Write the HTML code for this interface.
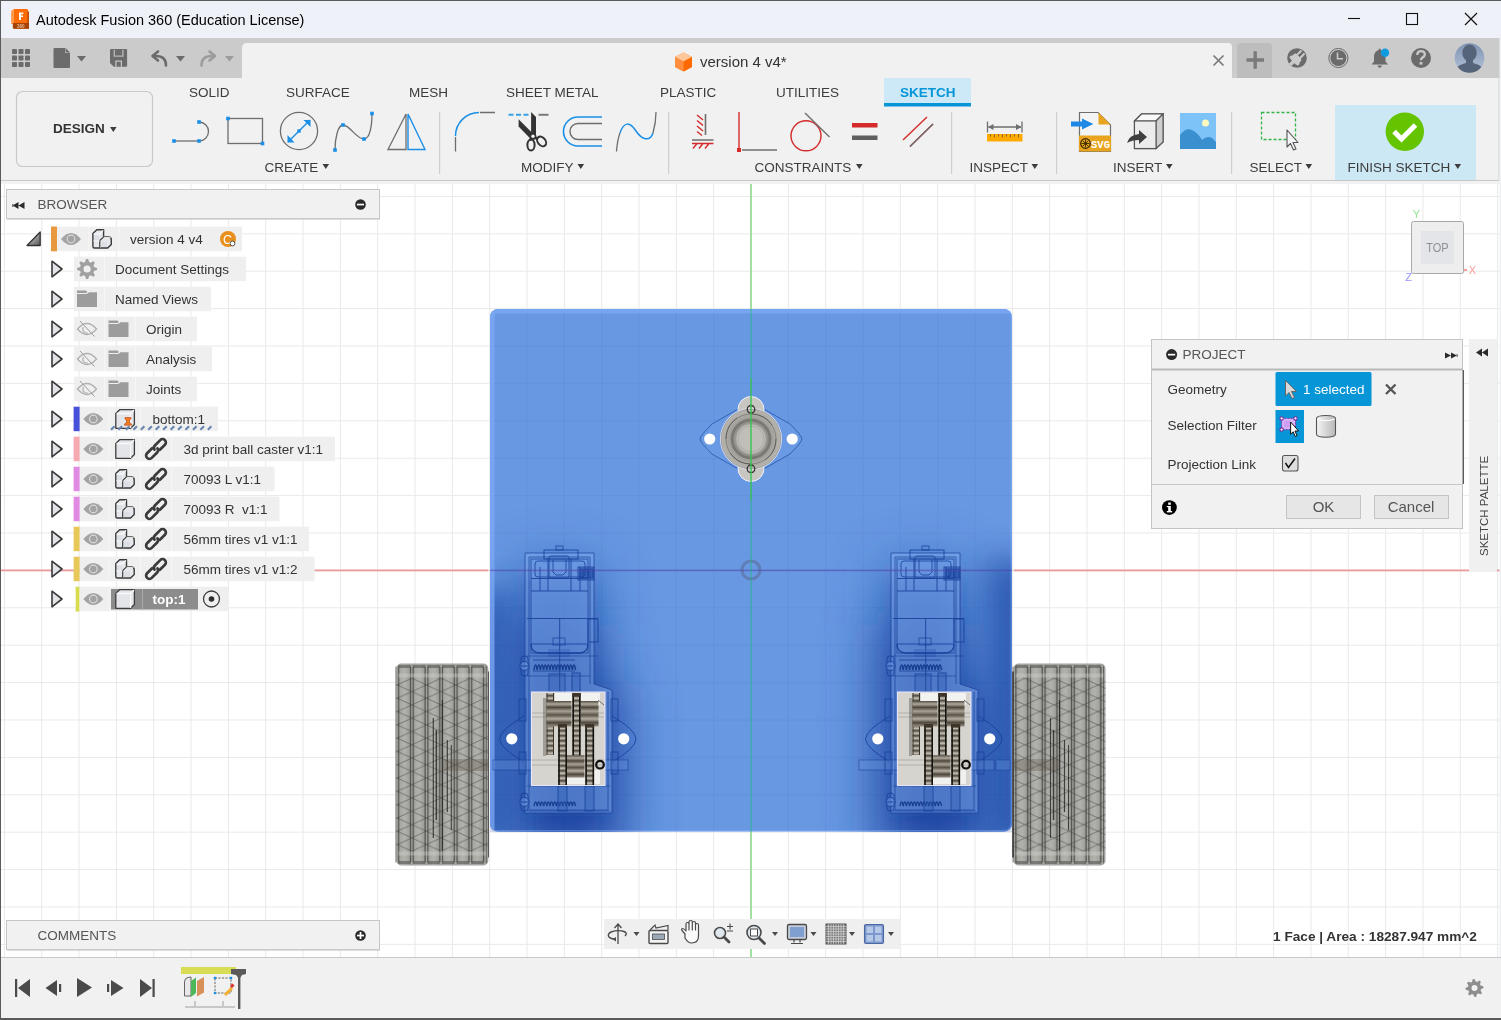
<!DOCTYPE html><html><head><meta charset="utf-8"><style>html,body{margin:0;padding:0;width:1501px;height:1020px;overflow:hidden;background:#fff}svg{display:block;font-family:"Liberation Sans",sans-serif}</style></head><body><svg width="1501" height="1020" viewBox="0 0 1501 1020" font-family="Liberation Sans, sans-serif"><rect x="0" y="0" width="1501" height="38" fill="#eff1f8" />
<rect x="0" y="38" width="1501" height="40" fill="#cbcbcb" />
<rect x="0" y="78" width="1501" height="102" fill="#f1f1f1" />
<rect x="0" y="180" width="1501" height="1" fill="#c9c9c9" />
<rect x="0" y="181" width="1501" height="776" fill="#ffffff" />
<rect x="0" y="957" width="1501" height="1" fill="#c8c8c8" />
<rect x="0" y="958" width="1501" height="62" fill="#f1f1f1" />
<path d="M242,78 V48 Q242,43 247,43 H1228 Q1232,43 1232,47 V78 Z" fill="#f1f1f1"/>
<!--x-->
<path d="M1237,78 V47 Q1237,43 1241,43 H1268 Q1272,43 1272,47 V78 Z" fill="#bdbdbd"/>
<path d="M4.40,181V957M41.73,181V957M79.06,181V957M116.39,181V957M153.72,181V957M191.05,181V957M228.38,181V957M265.71,181V957M303.04,181V957M340.37,181V957M377.70,181V957M415.03,181V957M452.36,181V957M489.69,181V957M527.02,181V957M564.35,181V957M601.68,181V957M639.01,181V957M676.34,181V957M713.67,181V957M751.00,181V957M788.33,181V957M825.66,181V957M862.99,181V957M900.32,181V957M937.65,181V957M974.98,181V957M1012.31,181V957M1049.64,181V957M1086.97,181V957M1124.30,181V957M1161.63,181V957M1198.96,181V957M1236.29,181V957M1273.62,181V957M1310.95,181V957M1348.28,181V957M1385.61,181V957M1422.94,181V957M1460.27,181V957M1497.60,181V957M0,196.45H1501M0,233.84H1501M0,271.24H1501M0,308.63H1501M0,346.03H1501M0,383.42H1501M0,420.82H1501M0,458.21H1501M0,495.61H1501M0,533.00H1501M0,570.40H1501M0,607.79H1501M0,645.19H1501M0,682.59H1501M0,719.98H1501M0,757.38H1501M0,794.77H1501M0,832.16H1501M0,869.56H1501M0,906.95H1501M0,944.35H1501" stroke="#e9e9e9" stroke-width="1" fill="none"/>
<defs>
<clipPath id="plateclip"><rect x="490" y="309" width="522" height="522.5" rx="8"/></clipPath>
<filter id="bl18" x="-50%" y="-50%" width="200%" height="200%"><feGaussianBlur stdDeviation="16"/></filter>
<filter id="bl6" x="-50%" y="-50%" width="200%" height="200%"><feGaussianBlur stdDeviation="5"/></filter>
<filter id="bl1"><feGaussianBlur stdDeviation="0.6"/></filter>
<linearGradient id="cylH" x1="0" y1="0" x2="0" y2="1">
 <stop offset="0" stop-color="#524a3e"/><stop offset="0.12" stop-color="#b0aa9e"/><stop offset="0.25" stop-color="#4e463a"/>
 <stop offset="0.4" stop-color="#a8a296"/><stop offset="0.55" stop-color="#5a5246"/><stop offset="0.7" stop-color="#b4aea2"/><stop offset="0.85" stop-color="#4e463a"/><stop offset="1" stop-color="#9a9286"/>
</linearGradient>
<pattern id="teethV" x="0" y="0" width="10" height="5" patternUnits="userSpaceOnUse">
 <rect width="10" height="5" fill="#8e897e"/><rect y="0" width="10" height="1.5" fill="#5a544a"/><rect y="2.5" width="10" height="1.5" fill="#bcb8ae"/>
</pattern>
<pattern id="hatch" x="3" y="0" width="29.2" height="13.3" patternUnits="userSpaceOnUse">
 <path d="M0,0 L29.2,13.3 M29.2,0 L0,13.3" stroke="#3e3e3c" stroke-width="0.85" fill="none" opacity="0.6"/>
</pattern>
<linearGradient id="ribg" x1="0" y1="0" x2="1" y2="0">
 <stop offset="0" stop-color="#7e7e7a"/><stop offset="0.2" stop-color="#a8a8a4"/><stop offset="0.5" stop-color="#b2b2ad"/><stop offset="0.8" stop-color="#a2a29e"/><stop offset="1" stop-color="#767672"/>
</linearGradient>
<radialGradient id="casterg" cx="0.5" cy="0.5" r="0.5">
 <stop offset="0" stop-color="#c4c2bc"/><stop offset="0.45" stop-color="#c0beb8"/><stop offset="0.55" stop-color="#8e8c86"/><stop offset="0.75" stop-color="#a8a69f"/><stop offset="1" stop-color="#b8b6b0"/>
</radialGradient>
</defs>
<g>
<rect x="396.3" y="663.5" width="92" height="202" rx="5" fill="#a2a29e"/>
<rect x="397.80" y="664.5" width="13.60" height="200" rx="4" fill="url(#ribg)"/>
<rect x="412.40" y="664.5" width="13.60" height="200" rx="4" fill="url(#ribg)"/>
<rect x="427.01" y="664.5" width="13.60" height="200" rx="4" fill="url(#ribg)"/>
<rect x="441.61" y="664.5" width="13.60" height="200" rx="4" fill="url(#ribg)"/>
<rect x="456.21" y="664.5" width="13.60" height="200" rx="4" fill="url(#ribg)"/>
<rect x="470.82" y="664.5" width="13.60" height="200" rx="4" fill="url(#ribg)"/>
<rect x="396.3" y="677.5" width="92" height="174" fill="url(#hatch)"/>
<path d="M395.90,666.5 V862.5 M398.70,666.5 V862.5" stroke="#3e3e3c" stroke-width="0.8" opacity="0.8"/>
<path d="M410.50,666.5 V862.5 M413.30,666.5 V862.5" stroke="#3e3e3c" stroke-width="0.8" opacity="0.8"/>
<path d="M425.11,666.5 V862.5 M427.91,666.5 V862.5" stroke="#3e3e3c" stroke-width="0.8" opacity="0.8"/>
<path d="M439.71,666.5 V862.5 M442.51,666.5 V862.5" stroke="#3e3e3c" stroke-width="0.8" opacity="0.8"/>
<path d="M454.31,666.5 V862.5 M457.11,666.5 V862.5" stroke="#3e3e3c" stroke-width="0.8" opacity="0.8"/>
<path d="M468.92,666.5 V862.5 M471.72,666.5 V862.5" stroke="#3e3e3c" stroke-width="0.8" opacity="0.8"/>
<path d="M483.52,666.5 V862.5 M486.32,666.5 V862.5" stroke="#3e3e3c" stroke-width="0.8" opacity="0.8"/>
<path d="M398.3,666.5 H486.3" stroke="#555" stroke-width="3" stroke-dasharray="12 2.6" opacity="0.6"/>
<path d="M398.3,862.5 H486.3" stroke="#555" stroke-width="3" stroke-dasharray="12 2.6" opacity="0.6"/>
<path d="M398.3,675.5 H486.3" stroke="#d8d8d4" stroke-width="4" opacity="0.35"/>
<path d="M398.3,853.5 H486.3" stroke="#d8d8d4" stroke-width="4" opacity="0.35"/>
<path d="M433.3,718 V838" stroke="#222" stroke-width="1.2" opacity="0.8"/>
<path d="M436.3,730 V820" stroke="#222" stroke-width="1.4" opacity="0.8"/>
<path d="M442.3,700 V850" stroke="#222" stroke-width="1.1" opacity="0.8"/>
<path d="M447.3,740 V812" stroke="#222" stroke-width="1.2" opacity="0.8"/>
<path d="M451.3,745 V830" stroke="#222" stroke-width="1" opacity="0.8"/>
<rect x="442.3" y="759" width="46.0" height="12" fill="#5a5040" opacity="0.3" filter="url(#bl1)"/>
<path d="M488.5,671.5 V857.5" stroke="#333" stroke-width="0.8"/>
</g>
<g>
<rect x="1013.5" y="663.5" width="92" height="202" rx="5" fill="#a2a29e"/>
<rect x="1015.00" y="664.5" width="13.60" height="200" rx="4" fill="url(#ribg)"/>
<rect x="1029.60" y="664.5" width="13.60" height="200" rx="4" fill="url(#ribg)"/>
<rect x="1044.21" y="664.5" width="13.60" height="200" rx="4" fill="url(#ribg)"/>
<rect x="1058.81" y="664.5" width="13.60" height="200" rx="4" fill="url(#ribg)"/>
<rect x="1073.41" y="664.5" width="13.60" height="200" rx="4" fill="url(#ribg)"/>
<rect x="1088.02" y="664.5" width="13.60" height="200" rx="4" fill="url(#ribg)"/>
<rect x="1013.5" y="677.5" width="92" height="174" fill="url(#hatch)"/>
<path d="M1013.10,666.5 V862.5 M1015.90,666.5 V862.5" stroke="#3e3e3c" stroke-width="0.8" opacity="0.8"/>
<path d="M1027.70,666.5 V862.5 M1030.50,666.5 V862.5" stroke="#3e3e3c" stroke-width="0.8" opacity="0.8"/>
<path d="M1042.31,666.5 V862.5 M1045.11,666.5 V862.5" stroke="#3e3e3c" stroke-width="0.8" opacity="0.8"/>
<path d="M1056.91,666.5 V862.5 M1059.71,666.5 V862.5" stroke="#3e3e3c" stroke-width="0.8" opacity="0.8"/>
<path d="M1071.51,666.5 V862.5 M1074.31,666.5 V862.5" stroke="#3e3e3c" stroke-width="0.8" opacity="0.8"/>
<path d="M1086.12,666.5 V862.5 M1088.92,666.5 V862.5" stroke="#3e3e3c" stroke-width="0.8" opacity="0.8"/>
<path d="M1100.72,666.5 V862.5 M1103.52,666.5 V862.5" stroke="#3e3e3c" stroke-width="0.8" opacity="0.8"/>
<path d="M1015.5,666.5 H1103.5" stroke="#555" stroke-width="3" stroke-dasharray="12 2.6" opacity="0.6"/>
<path d="M1015.5,862.5 H1103.5" stroke="#555" stroke-width="3" stroke-dasharray="12 2.6" opacity="0.6"/>
<path d="M1015.5,675.5 H1103.5" stroke="#d8d8d4" stroke-width="4" opacity="0.35"/>
<path d="M1015.5,853.5 H1103.5" stroke="#d8d8d4" stroke-width="4" opacity="0.35"/>
<path d="M1050.5,718 V838" stroke="#222" stroke-width="1.2" opacity="0.8"/>
<path d="M1053.5,730 V820" stroke="#222" stroke-width="1.4" opacity="0.8"/>
<path d="M1059.5,700 V850" stroke="#222" stroke-width="1.1" opacity="0.8"/>
<path d="M1064.5,740 V812" stroke="#222" stroke-width="1.2" opacity="0.8"/>
<path d="M1068.5,745 V830" stroke="#222" stroke-width="1" opacity="0.8"/>
<rect x="1013.5" y="759" width="46.0" height="12" fill="#5a5040" opacity="0.3" filter="url(#bl1)"/>
<path d="M1013.0,671.5 V857.5" stroke="#111" stroke-width="1.2"/>
</g>
<rect x="490" y="309" width="522" height="522.5" rx="8" fill="#6898e2"/>
<g clip-path="url(#plateclip)">
<filter id="bl28" x="-80%" y="-80%" width="260%" height="260%"><feGaussianBlur stdDeviation="26"/></filter>
<g filter="url(#bl28)">
<path d="M512,625 H600 V680 L622,690 V860 H512 Z" fill="#1a45a0" opacity="1"/>
<rect x="518" y="565" width="80" height="70" fill="#1a45a0" opacity="0.55"/>
<path d="M878,625 H966 V680 L988,690 V860 H878 Z" fill="#1a45a0" opacity="1"/>
<rect x="884" y="565" width="80" height="70" fill="#1a45a0" opacity="0.55"/>
</g>
<g filter="url(#bl6)">
<path d="M524,580 H594 V684 L612,690 V813 H524 Z" fill="#2a58b0" opacity="0.35"/>
<path d="M890,580 H960 V684 L978,690 V813 H890 Z" fill="#2a58b0" opacity="0.35"/>
</g>
<rect x="455" y="590" width="60" height="260" fill="#2250a8" opacity="0.7" filter="url(#bl18)"/>
<rect x="985" y="560" width="60" height="290" fill="#2250a8" opacity="0.8" filter="url(#bl18)"/>
<path d="M527.02,309V832M490,346.03H1012M564.35,309V832M490,383.42H1012M601.68,309V832M490,420.82H1012M639.01,309V832M490,458.21H1012M676.34,309V832M490,495.61H1012M713.67,309V832M490,533.00H1012M751.00,309V832M490,570.40H1012M788.33,309V832M490,607.79H1012M825.66,309V832M490,645.19H1012M862.99,309V832M490,682.59H1012M900.32,309V832M490,719.98H1012M937.65,309V832M490,757.38H1012M974.98,309V832M490,794.77H1012" stroke="#1e3c80" stroke-width="1" opacity="0.06" fill="none"/>
<path d="M490,831 V317 Q490,309 498,309 H1012" fill="none" stroke="#7eaaf7" stroke-width="9" opacity="0.75"/>
<path d="M1012,309 V823 Q1012,831.5 1004,831.5 H490" fill="none" stroke="#80b0ff" stroke-width="3" opacity="0.45"/>
</g>
<g transform="translate(0,0)" fill="none" stroke="#17409a" stroke-width="1">
<path d="M525,553 H594 V684 L612,690 V813 H525 Z" fill="#8cb6f6" fill-opacity="0.42" stroke-opacity="0.7"/>
<path d="M529,557 H590 V684 M529,557 V810 H608 V692" stroke-opacity="0.7"/>
<path d="M524,716 Q500,730 499.5,739 Q500,748 524,762 M612,716 Q636,730 636,739 Q636,748 612,762" stroke-opacity="0.85"/>
<rect x="493" y="760" width="135" height="10" fill="#6f9ce2" fill-opacity="0.3" stroke-opacity="0.55"/>
<rect x="519" y="699" width="7" height="22" stroke-opacity="0.75"/><rect x="519" y="752" width="7" height="22" stroke-opacity="0.75"/>
<rect x="611" y="699" width="7" height="22" stroke-opacity="0.75"/><rect x="611" y="752" width="7" height="22" stroke-opacity="0.75"/>
<rect x="531" y="559" width="57" height="94" stroke-opacity="0.75" fill="#5f8fdb" fill-opacity="0.3"/>
<path d="M531,578.5 H588 M531,591 H588 M527,618.5 H598 M531,644 H588 M559.7,618 V705 M548,559 V591 M571,559 V591 M540,567 V591 M580,567 V591" stroke-opacity="0.85"/>
<rect x="544" y="550" width="34" height="9" stroke-opacity="0.85"/><rect x="556" y="546" width="7" height="4" stroke-opacity="0.75"/>
<rect x="578" y="567" width="16" height="13" fill="#2c58ae" fill-opacity="0.35" stroke-opacity="0.8"/>
<rect x="588" y="619" width="10" height="23" stroke-opacity="0.85"/>
<rect x="553" y="638" width="12" height="7" stroke-opacity="0.7"/>
<rect x="548" y="649" width="22" height="8" fill="#2c58ae" fill-opacity="0.35" stroke="none"/>
<path d="M534.0,670 q1.6,-10 3.2,0 M537.2,670 q1.6,-10 3.2,0 M540.4,670 q1.6,-10 3.2,0 M543.6,670 q1.6,-10 3.2,0 M546.8,670 q1.6,-10 3.2,0 M550.0,670 q1.6,-10 3.2,0 M553.2,670 q1.6,-10 3.2,0 M556.4,670 q1.6,-10 3.2,0 M559.6,670 q1.6,-10 3.2,0 M562.8,670 q1.6,-10 3.2,0 M566.0,670 q1.6,-10 3.2,0 M569.2,670 q1.6,-10 3.2,0 M572.4,670 q1.6,-10 3.2,0 " stroke="#12368a" stroke-width="1.5" stroke-opacity="0.9"/>
<path d="M533,660 H575 M533,671 H575" stroke-opacity="0.75"/>
<rect x="521" y="656" width="7" height="20" rx="3" stroke-opacity="0.85"/>
<rect x="549" y="674" width="16" height="18" fill="#2c58ae" fill-opacity="0.25" stroke-opacity="0.75"/>
<rect x="572" y="673" width="8" height="19" fill="#2c58ae" fill-opacity="0.3" stroke-opacity="0.85"/>
<path d="M534.0,806 q1.6,-8 3.2,0 M537.2,806 q1.6,-8 3.2,0 M540.4,806 q1.6,-8 3.2,0 M543.6,806 q1.6,-8 3.2,0 M546.8,806 q1.6,-8 3.2,0 M550.0,806 q1.6,-8 3.2,0 M553.2,806 q1.6,-8 3.2,0 M556.4,806 q1.6,-8 3.2,0 M559.6,806 q1.6,-8 3.2,0 M562.8,806 q1.6,-8 3.2,0 M566.0,806 q1.6,-8 3.2,0 M569.2,806 q1.6,-8 3.2,0 M572.4,806 q1.6,-8 3.2,0 " stroke="#12368a" stroke-width="1.4" stroke-opacity="0.85"/>
<rect x="521" y="793" width="7" height="18" rx="3" stroke-opacity="0.85"/>
<rect x="558" y="786" width="9" height="25" fill="#2c58ae" fill-opacity="0.3" stroke-opacity="0.75"/><rect x="585" y="786" width="9" height="25" fill="#2c58ae" fill-opacity="0.3" stroke-opacity="0.75"/>
<rect x="535" y="561" width="50" height="16" rx="3" stroke-opacity="0.8"/>
<rect x="549" y="556" width="20" height="22" rx="2" stroke-opacity="0.8"/>
<path d="M553,560 V572 L556,575 H563 L566,572 V560" stroke-opacity="0.8"/>
<rect x="580" y="569" width="13" height="9" fill="#17409a" fill-opacity="0.5" stroke-opacity="0.9"/>
<path d="M583,569 V578 M588,569 V578" stroke-opacity="0.9"/>
<path d="M531,644 Q531,653 540,653 H579 Q588,653 588,644" stroke-opacity="0.9" stroke-width="1.4"/>
<circle cx="524.5" cy="666" r="4.5" fill="#6f9de6" fill-opacity="0.5" stroke-opacity="0.9"/><path d="M521,666 H528" stroke-opacity="0.9"/>
<circle cx="524.5" cy="802" r="4.5" fill="#6f9de6" fill-opacity="0.5" stroke-opacity="0.9"/><path d="M521,802 H528" stroke-opacity="0.9"/>
<path d="M527,656 H598 M527,676 H590 M527,786 H610 M527,811 H610" stroke-opacity="0.6"/>
<rect x="630" y="760" width="0" height="10" fill="#6f9ce2" fill-opacity="0.3" stroke-opacity="0.5"/>
</g>
<circle cx="511.8" cy="738.8" r="5.6" fill="#fff"/><circle cx="623.7" cy="738.8" r="5.6" fill="#fff"/>
<g transform="translate(0,0)">
<rect x="531.5" y="692" width="73.5" height="93.5" fill="#d6d4cf" stroke="#e8e6ff" stroke-width="1"/>
<rect x="555" y="693" width="45" height="12" fill="#f2f2f0"/>
<rect x="560" y="770" width="40" height="14" fill="#f0f0ee"/>
<path d="M532,713 H604 M532,717 H604 M532,760 H604 M532,765 H604" stroke="#8a8880" stroke-width="0.8" opacity="0.6"/>
<rect x="543" y="698" width="3" height="58" fill="#6a665e" opacity="0.5"/>
<rect x="546.5" y="693" width="7.5" height="62" fill="url(#teethV)"/>
<path d="M547,693 V755 M553.5,693 V755" stroke="#3a3226" stroke-width="1"/>
<rect x="546.5" y="701" width="25" height="25.5" fill="url(#cylH)"/>
<rect x="580.5" y="701" width="18" height="25.5" fill="url(#cylH)"/>
<rect x="572.4" y="693" width="8.2" height="62.5" fill="url(#teethV)"/>
<path d="M573.1999999999999,693 V755.5 M579.8000000000001,693 V755.5" stroke="#15120c" stroke-width="1.6"/>
<rect x="572.4" y="693" width="8.2" height="3.5" fill="#3e3428"/>
<rect x="566.5" y="755.3" width="18" height="22.3" fill="url(#cylH)"/>
<rect x="558.2" y="724" width="8.8" height="61" fill="url(#teethV)"/>
<path d="M559.0,724 V785 M566.2,724 V785" stroke="#15120c" stroke-width="1.6"/>
<rect x="558.2" y="724" width="8.8" height="3.5" fill="#3e3428"/>
<rect x="585.3" y="724" width="8.8" height="61" fill="url(#teethV)"/>
<path d="M586.0999999999999,724 V785 M593.3,724 V785" stroke="#15120c" stroke-width="1.6"/>
<rect x="585.3" y="724" width="8.8" height="3.5" fill="#3e3428"/>
<circle cx="600" cy="764.7" r="3.8" fill="none" stroke="#111" stroke-width="2.2"/>
<path d="M598,700 L604,705" stroke="#555" stroke-width="0.8"/>
</g>
<g transform="translate(366,0)" fill="none" stroke="#17409a" stroke-width="1">
<path d="M525,553 H594 V684 L612,690 V813 H525 Z" fill="#8cb6f6" fill-opacity="0.42" stroke-opacity="0.7"/>
<path d="M529,557 H590 V684 M529,557 V810 H608 V692" stroke-opacity="0.7"/>
<path d="M524,716 Q500,730 499.5,739 Q500,748 524,762 M612,716 Q636,730 636,739 Q636,748 612,762" stroke-opacity="0.85"/>
<rect x="493" y="760" width="135" height="10" fill="#6f9ce2" fill-opacity="0.3" stroke-opacity="0.55"/>
<rect x="519" y="699" width="7" height="22" stroke-opacity="0.75"/><rect x="519" y="752" width="7" height="22" stroke-opacity="0.75"/>
<rect x="611" y="699" width="7" height="22" stroke-opacity="0.75"/><rect x="611" y="752" width="7" height="22" stroke-opacity="0.75"/>
<rect x="531" y="559" width="57" height="94" stroke-opacity="0.75" fill="#5f8fdb" fill-opacity="0.3"/>
<path d="M531,578.5 H588 M531,591 H588 M527,618.5 H598 M531,644 H588 M559.7,618 V705 M548,559 V591 M571,559 V591 M540,567 V591 M580,567 V591" stroke-opacity="0.85"/>
<rect x="544" y="550" width="34" height="9" stroke-opacity="0.85"/><rect x="556" y="546" width="7" height="4" stroke-opacity="0.75"/>
<rect x="578" y="567" width="16" height="13" fill="#2c58ae" fill-opacity="0.35" stroke-opacity="0.8"/>
<rect x="588" y="619" width="10" height="23" stroke-opacity="0.85"/>
<rect x="553" y="638" width="12" height="7" stroke-opacity="0.7"/>
<rect x="548" y="649" width="22" height="8" fill="#2c58ae" fill-opacity="0.35" stroke="none"/>
<path d="M534.0,670 q1.6,-10 3.2,0 M537.2,670 q1.6,-10 3.2,0 M540.4,670 q1.6,-10 3.2,0 M543.6,670 q1.6,-10 3.2,0 M546.8,670 q1.6,-10 3.2,0 M550.0,670 q1.6,-10 3.2,0 M553.2,670 q1.6,-10 3.2,0 M556.4,670 q1.6,-10 3.2,0 M559.6,670 q1.6,-10 3.2,0 M562.8,670 q1.6,-10 3.2,0 M566.0,670 q1.6,-10 3.2,0 M569.2,670 q1.6,-10 3.2,0 M572.4,670 q1.6,-10 3.2,0 " stroke="#12368a" stroke-width="1.5" stroke-opacity="0.9"/>
<path d="M533,660 H575 M533,671 H575" stroke-opacity="0.75"/>
<rect x="521" y="656" width="7" height="20" rx="3" stroke-opacity="0.85"/>
<rect x="549" y="674" width="16" height="18" fill="#2c58ae" fill-opacity="0.25" stroke-opacity="0.75"/>
<rect x="572" y="673" width="8" height="19" fill="#2c58ae" fill-opacity="0.3" stroke-opacity="0.85"/>
<path d="M534.0,806 q1.6,-8 3.2,0 M537.2,806 q1.6,-8 3.2,0 M540.4,806 q1.6,-8 3.2,0 M543.6,806 q1.6,-8 3.2,0 M546.8,806 q1.6,-8 3.2,0 M550.0,806 q1.6,-8 3.2,0 M553.2,806 q1.6,-8 3.2,0 M556.4,806 q1.6,-8 3.2,0 M559.6,806 q1.6,-8 3.2,0 M562.8,806 q1.6,-8 3.2,0 M566.0,806 q1.6,-8 3.2,0 M569.2,806 q1.6,-8 3.2,0 M572.4,806 q1.6,-8 3.2,0 " stroke="#12368a" stroke-width="1.4" stroke-opacity="0.85"/>
<rect x="521" y="793" width="7" height="18" rx="3" stroke-opacity="0.85"/>
<rect x="558" y="786" width="9" height="25" fill="#2c58ae" fill-opacity="0.3" stroke-opacity="0.75"/><rect x="585" y="786" width="9" height="25" fill="#2c58ae" fill-opacity="0.3" stroke-opacity="0.75"/>
<rect x="535" y="561" width="50" height="16" rx="3" stroke-opacity="0.8"/>
<rect x="549" y="556" width="20" height="22" rx="2" stroke-opacity="0.8"/>
<path d="M553,560 V572 L556,575 H563 L566,572 V560" stroke-opacity="0.8"/>
<rect x="580" y="569" width="13" height="9" fill="#17409a" fill-opacity="0.5" stroke-opacity="0.9"/>
<path d="M583,569 V578 M588,569 V578" stroke-opacity="0.9"/>
<path d="M531,644 Q531,653 540,653 H579 Q588,653 588,644" stroke-opacity="0.9" stroke-width="1.4"/>
<circle cx="524.5" cy="666" r="4.5" fill="#6f9de6" fill-opacity="0.5" stroke-opacity="0.9"/><path d="M521,666 H528" stroke-opacity="0.9"/>
<circle cx="524.5" cy="802" r="4.5" fill="#6f9de6" fill-opacity="0.5" stroke-opacity="0.9"/><path d="M521,802 H528" stroke-opacity="0.9"/>
<path d="M527,656 H598 M527,676 H590 M527,786 H610 M527,811 H610" stroke-opacity="0.6"/>
<rect x="630" y="760" width="14" height="10" fill="#6f9ce2" fill-opacity="0.3" stroke-opacity="0.5"/>
</g>
<circle cx="877.8" cy="738.8" r="5.6" fill="#fff"/><circle cx="989.7" cy="738.8" r="5.6" fill="#fff"/>
<g transform="translate(366,0)">
<rect x="531.5" y="692" width="73.5" height="93.5" fill="#d6d4cf" stroke="#e8e6ff" stroke-width="1"/>
<rect x="555" y="693" width="45" height="12" fill="#f2f2f0"/>
<rect x="560" y="770" width="40" height="14" fill="#f0f0ee"/>
<path d="M532,713 H604 M532,717 H604 M532,760 H604 M532,765 H604" stroke="#8a8880" stroke-width="0.8" opacity="0.6"/>
<rect x="543" y="698" width="3" height="58" fill="#6a665e" opacity="0.5"/>
<rect x="546.5" y="693" width="7.5" height="62" fill="url(#teethV)"/>
<path d="M547,693 V755 M553.5,693 V755" stroke="#3a3226" stroke-width="1"/>
<rect x="546.5" y="701" width="25" height="25.5" fill="url(#cylH)"/>
<rect x="580.5" y="701" width="18" height="25.5" fill="url(#cylH)"/>
<rect x="572.4" y="693" width="8.2" height="62.5" fill="url(#teethV)"/>
<path d="M573.1999999999999,693 V755.5 M579.8000000000001,693 V755.5" stroke="#15120c" stroke-width="1.6"/>
<rect x="572.4" y="693" width="8.2" height="3.5" fill="#3e3428"/>
<rect x="566.5" y="755.3" width="18" height="22.3" fill="url(#cylH)"/>
<rect x="558.2" y="724" width="8.8" height="61" fill="url(#teethV)"/>
<path d="M559.0,724 V785 M566.2,724 V785" stroke="#15120c" stroke-width="1.6"/>
<rect x="558.2" y="724" width="8.8" height="3.5" fill="#3e3428"/>
<rect x="585.3" y="724" width="8.8" height="61" fill="url(#teethV)"/>
<path d="M586.0999999999999,724 V785 M593.3,724 V785" stroke="#15120c" stroke-width="1.6"/>
<rect x="585.3" y="724" width="8.8" height="3.5" fill="#3e3428"/>
<circle cx="600" cy="764.7" r="3.8" fill="none" stroke="#111" stroke-width="2.2"/>
<path d="M598,700 L604,705" stroke="#555" stroke-width="0.8"/>
</g>
<g>
<path d="M712,424 Q700,436 700,439 Q700,442 712,454 L740,470 L762,470 L790,454 Q802,442 802,439 Q802,436 790,424 L762,408 L740,408 Z" fill="#6a9ae4" stroke="#2c58ae" stroke-opacity="0.85" stroke-width="1"/>
<circle cx="751" cy="409.5" r="13" fill="#c8c6c0" stroke="#f0f0ff" stroke-width="1"/>
<circle cx="751" cy="468.5" r="13" fill="#c8c6c0" stroke="#f0f0ff" stroke-width="1"/>
<circle cx="751" cy="439" r="30.5" fill="url(#casterg)" stroke="#f0f0ff" stroke-width="1"/>
<circle cx="751" cy="439" r="30" fill="none" stroke="#777" stroke-width="0.7" opacity="0.7"/>
<circle cx="751" cy="439" r="25" fill="none" stroke="#6a6a66" stroke-width="1" opacity="0.6"/>
<circle cx="751" cy="439" r="19" fill="none" stroke="#5a5a56" stroke-width="2.5" opacity="0.5"/>
<circle cx="751" cy="439" r="15.5" fill="none" stroke="#9a9a96" stroke-width="0.8"/>
<circle cx="751" cy="439" r="13" fill="#c0beb9" stroke="#a8a6a0" stroke-width="0.8"/>
<circle cx="751" cy="409.3" r="3.8" fill="none" stroke="#333" stroke-width="1.3"/>
<circle cx="751" cy="468.8" r="3.8" fill="none" stroke="#333" stroke-width="1.3"/>
<path d="M751,414 A25,25 0 0,1 772,425" transform="rotate(0 751 439)" fill="none" stroke="#444" stroke-width="1" opacity="0.6"/>
<path d="M751,414 A25,25 0 0,1 772,425" transform="rotate(90 751 439)" fill="none" stroke="#444" stroke-width="1" opacity="0.6"/>
<path d="M751,414 A25,25 0 0,1 772,425" transform="rotate(180 751 439)" fill="none" stroke="#444" stroke-width="1" opacity="0.6"/>
<path d="M751,414 A25,25 0 0,1 772,425" transform="rotate(270 751 439)" fill="none" stroke="#444" stroke-width="1" opacity="0.6"/>
<circle cx="709.7" cy="439" r="5.6" fill="#fff"/><circle cx="792.2" cy="439" r="5.6" fill="#fff"/>
</g>
<circle cx="751" cy="570" r="9" fill="none" stroke="#5a6a90" stroke-width="3" opacity="0.55"/>
<rect x="0" y="569.5" width="488.5" height="1.8" fill="#e99a9a" />
<rect x="1013.5" y="569.5" width="487.5" height="1.8" fill="#e99a9a" />
<rect x="490" y="569.6" width="522" height="1.6" fill="rgba(80,70,170,0.55)" />
<rect x="750.3" y="181" width="1.4" height="128" fill="#7ed87e" />
<rect x="750.3" y="832" width="1.4" height="125" fill="#7ed87e" />
<rect x="750.3" y="309" width="1.4" height="523" fill="rgba(30,190,130,0.55)" />
<rect x="750.3" y="378" width="1.4" height="122" fill="rgba(60,200,60,0.7)" />
<text x="36" y="25" font-size="14.5" fill="#000" font-weight="normal" text-anchor="start" >Autodesk Fusion 360 (Education License)</text>
<text x="700" y="67" font-size="15" fill="#333" font-weight="normal" text-anchor="start" >version 4 v4*</text>
<path d="M1213.5,55.5 L1223.5,65.5 M1223.5,55.5 L1213.5,65.5" stroke="#7a7a7a" stroke-width="1.7"/>
<rect x="884" y="78" width="87" height="28" fill="#cde8f6" />
<rect x="884" y="103" width="87" height="3.5" fill="#0696d7" />
<text x="189" y="97" font-size="13.5" fill="#3c3c3c" font-weight="normal" text-anchor="start" >SOLID</text>
<text x="286" y="97" font-size="13.5" fill="#3c3c3c" font-weight="normal" text-anchor="start" >SURFACE</text>
<text x="409" y="97" font-size="13.5" fill="#3c3c3c" font-weight="normal" text-anchor="start" >MESH</text>
<text x="506" y="97" font-size="13.5" fill="#3c3c3c" font-weight="normal" text-anchor="start" >SHEET METAL</text>
<text x="660" y="97" font-size="13.5" fill="#3c3c3c" font-weight="normal" text-anchor="start" >PLASTIC</text>
<text x="776" y="97" font-size="13.5" fill="#3c3c3c" font-weight="normal" text-anchor="start" >UTILITIES</text>
<text x="900" y="97" font-size="13.5" fill="#0696d7" font-weight="bold" text-anchor="start" >SKETCH</text>
<rect x="16.5" y="91.5" width="136" height="75" rx="6" fill="#f1f1f1" stroke="#c9c9c9" stroke-width="1.2"/>
<text x="53" y="133" font-size="13.5" fill="#333" font-weight="bold" text-anchor="start" >DESIGN</text>
<rect x="1335" y="105" width="141" height="75" fill="#cde8f5" />
<text x="264.5" y="172" font-size="13.5" fill="#3c3c3c" font-weight="normal" text-anchor="start" >CREATE</text>
<text x="521" y="172" font-size="13.5" fill="#3c3c3c" font-weight="normal" text-anchor="start" >MODIFY</text>
<text x="754.5" y="172" font-size="13.5" fill="#3c3c3c" font-weight="normal" text-anchor="start" >CONSTRAINTS</text>
<text x="969.5" y="172" font-size="13.5" fill="#3c3c3c" font-weight="normal" text-anchor="start" >INSPECT</text>
<text x="1113" y="172" font-size="13.5" fill="#3c3c3c" font-weight="normal" text-anchor="start" >INSERT</text>
<text x="1249.5" y="172" font-size="13.5" fill="#3c3c3c" font-weight="normal" text-anchor="start" >SELECT</text>
<text x="1347.5" y="172" font-size="13.5" fill="#3c3c3c" font-weight="normal" text-anchor="start" >FINISH SKETCH</text>
<path d="M110,127 h6.6 l-3.3,5 z" fill="#3c3c3c"/>
<path d="M322.5,164 h6.6 l-3.3,5 z" fill="#3c3c3c"/>
<path d="M577.5,164 h6.6 l-3.3,5 z" fill="#3c3c3c"/>
<path d="M856,164 h6.6 l-3.3,5 z" fill="#3c3c3c"/>
<path d="M1031.5,164 h6.6 l-3.3,5 z" fill="#3c3c3c"/>
<path d="M1166,164 h6.6 l-3.3,5 z" fill="#3c3c3c"/>
<path d="M1305.5,164 h6.6 l-3.3,5 z" fill="#3c3c3c"/>
<path d="M1454.5,164 h6.6 l-3.3,5 z" fill="#3c3c3c"/>
<rect x="439" y="112" width="1.2" height="62" fill="#cfcfcf" />
<rect x="668" y="112" width="1.2" height="62" fill="#cfcfcf" />
<rect x="951" y="112" width="1.2" height="62" fill="#cfcfcf" />
<rect x="1056" y="112" width="1.2" height="62" fill="#cfcfcf" />
<rect x="1231" y="112" width="1.2" height="62" fill="#cfcfcf" />
<rect x="57" y="226.7" width="185" height="24.5" fill="#efefef"/>
<rect x="88.5" y="226.7" width="1" height="24.5" fill="#f6f6f6"/>
<rect x="118.5" y="226.7" width="1" height="24.5" fill="#f6f6f6"/>
<rect x="74" y="256.7" width="172" height="24.5" fill="#efefef"/>
<rect x="104" y="256.7" width="1" height="24.5" fill="#f6f6f6"/>
<rect x="74" y="286.7" width="137" height="24.5" fill="#efefef"/>
<rect x="104" y="286.7" width="1" height="24.5" fill="#f6f6f6"/>
<rect x="74" y="316.7" width="123" height="24.5" fill="#efefef"/>
<rect x="104" y="316.7" width="1" height="24.5" fill="#f6f6f6"/>
<rect x="135" y="316.7" width="1" height="24.5" fill="#f6f6f6"/>
<rect x="74" y="346.7" width="138" height="24.5" fill="#efefef"/>
<rect x="104" y="346.7" width="1" height="24.5" fill="#f6f6f6"/>
<rect x="135" y="346.7" width="1" height="24.5" fill="#f6f6f6"/>
<rect x="74" y="376.7" width="123" height="24.5" fill="#efefef"/>
<rect x="104" y="376.7" width="1" height="24.5" fill="#f6f6f6"/>
<rect x="135" y="376.7" width="1" height="24.5" fill="#f6f6f6"/>
<rect x="79.5" y="406.7" width="138.5" height="24.5" fill="#efefef"/>
<rect x="108.5" y="406.7" width="1" height="24.5" fill="#f6f6f6"/>
<rect x="140" y="406.7" width="1" height="24.5" fill="#f6f6f6"/>
<rect x="79.5" y="436.7" width="255.5" height="24.5" fill="#efefef"/>
<rect x="108.5" y="436.7" width="1" height="24.5" fill="#f6f6f6"/>
<rect x="140" y="436.7" width="1" height="24.5" fill="#f6f6f6"/>
<rect x="171" y="436.7" width="1" height="24.5" fill="#f6f6f6"/>
<rect x="79.5" y="466.7" width="195.0" height="24.5" fill="#efefef"/>
<rect x="108.5" y="466.7" width="1" height="24.5" fill="#f6f6f6"/>
<rect x="140" y="466.7" width="1" height="24.5" fill="#f6f6f6"/>
<rect x="171" y="466.7" width="1" height="24.5" fill="#f6f6f6"/>
<rect x="79.5" y="496.7" width="200.0" height="24.5" fill="#efefef"/>
<rect x="108.5" y="496.7" width="1" height="24.5" fill="#f6f6f6"/>
<rect x="140" y="496.7" width="1" height="24.5" fill="#f6f6f6"/>
<rect x="171" y="496.7" width="1" height="24.5" fill="#f6f6f6"/>
<rect x="79.5" y="526.7" width="229.5" height="24.5" fill="#efefef"/>
<rect x="108.5" y="526.7" width="1" height="24.5" fill="#f6f6f6"/>
<rect x="140" y="526.7" width="1" height="24.5" fill="#f6f6f6"/>
<rect x="171" y="526.7" width="1" height="24.5" fill="#f6f6f6"/>
<rect x="79.5" y="556.7" width="235.0" height="24.5" fill="#efefef"/>
<rect x="108.5" y="556.7" width="1" height="24.5" fill="#f6f6f6"/>
<rect x="140" y="556.7" width="1" height="24.5" fill="#f6f6f6"/>
<rect x="171" y="556.7" width="1" height="24.5" fill="#f6f6f6"/>
<rect x="79.5" y="586.7" width="149.5" height="24.5" fill="#efefef"/>
<rect x="108.5" y="586.7" width="1" height="24.5" fill="#f6f6f6"/>
<rect x="111" y="589" width="87" height="20.5" fill="#8c8c8c"/>
<rect x="142" y="589" width="1" height="20.5" fill="#a8a8a8"/>
<rect x="6.5" y="189.5" width="373" height="29" fill="#f1f1f1" stroke="#c6c6c6"/>
<rect x="7" y="218.5" width="373" height="1.2" fill="#cdcdcd" />
<text x="37.5" y="209" font-size="13.5" fill="#555" font-weight="normal" text-anchor="start" >BROWSER</text>
<text x="130" y="244" font-size="13.5" fill="#333" font-weight="normal" text-anchor="start" xml:space="preserve">version 4 v4</text>
<text x="115" y="274" font-size="13.5" fill="#333" font-weight="normal" text-anchor="start" xml:space="preserve">Document Settings</text>
<text x="115" y="304" font-size="13.5" fill="#333" font-weight="normal" text-anchor="start" xml:space="preserve">Named Views</text>
<text x="146" y="334" font-size="13.5" fill="#333" font-weight="normal" text-anchor="start" xml:space="preserve">Origin</text>
<text x="146" y="364" font-size="13.5" fill="#333" font-weight="normal" text-anchor="start" xml:space="preserve">Analysis</text>
<text x="146" y="394" font-size="13.5" fill="#333" font-weight="normal" text-anchor="start" xml:space="preserve">Joints</text>
<text x="152.5" y="424" font-size="13.5" fill="#333" font-weight="normal" text-anchor="start" xml:space="preserve">bottom:1</text>
<text x="183.5" y="454" font-size="13.5" fill="#333" font-weight="normal" text-anchor="start" xml:space="preserve">3d print ball caster v1:1</text>
<text x="183.5" y="484" font-size="13.5" fill="#333" font-weight="normal" text-anchor="start" xml:space="preserve">70093 L v1:1</text>
<text x="183.5" y="514" font-size="13.5" fill="#333" font-weight="normal" text-anchor="start" xml:space="preserve">70093 R  v1:1</text>
<text x="183.5" y="544" font-size="13.5" fill="#333" font-weight="normal" text-anchor="start" xml:space="preserve">56mm tires v1 v1:1</text>
<text x="183.5" y="574" font-size="13.5" fill="#333" font-weight="normal" text-anchor="start" xml:space="preserve">56mm tires v1 v1:2</text>
<text x="152.5" y="604" font-size="13.5" fill="#fff" font-weight="bold" text-anchor="start" >top:1</text>
<rect x="6.5" y="920.5" width="373" height="29" fill="#f1f1f1" stroke="#c6c6c6"/>
<rect x="7" y="949.5" width="373" height="1.2" fill="#cdcdcd" />
<text x="37.5" y="940" font-size="13.5" fill="#555" font-weight="normal" text-anchor="start" >COMMENTS</text>
<text x="1273" y="941" font-size="13.65" fill="#333" font-weight="bold" text-anchor="start" >1 Face | Area : 18287.947 mm^2</text>
<rect x="1151.5" y="339.5" width="311" height="189" fill="#f1f1f1" stroke="#c4c4c4"/>
<rect x="1152" y="368.5" width="311" height="2" fill="#b9b9b9" />
<rect x="1152" y="484" width="311" height="1" fill="#c8c8c8" />
<text x="1182.5" y="359" font-size="13.5" fill="#555" font-weight="normal" text-anchor="start" >PROJECT</text>
<text x="1167.5" y="393.6" font-size="13.5" fill="#333" font-weight="normal" text-anchor="start" >Geometry</text>
<text x="1167.5" y="430.4" font-size="13.5" fill="#333" font-weight="normal" text-anchor="start" >Selection Filter</text>
<text x="1167.5" y="468.6" font-size="13.5" fill="#333" font-weight="normal" text-anchor="start" >Projection Link</text>
<rect x="1275.5" y="372" width="96" height="34" rx="1.5" fill="#0696d7"/>
<text x="1303" y="393.6" font-size="13.5" fill="#fff" font-weight="normal" text-anchor="start" >1 selected</text>
<rect x="1275.5" y="410" width="28.5" height="33" fill="#0696d7" />
<rect x="1286.5" y="495.5" width="74" height="23" fill="#e6e6e6" stroke="#c4c4c4"/>
<rect x="1374.5" y="495.5" width="74" height="23" fill="#e6e6e6" stroke="#c4c4c4"/>
<text x="1323.5" y="512" font-size="15" fill="#555" font-weight="normal" text-anchor="middle" >OK</text>
<text x="1411" y="512" font-size="15" fill="#555" font-weight="normal" text-anchor="middle" >Cancel</text>
<rect x="1469" y="339" width="28" height="233" fill="#f0f0f0" />
<text x="1487.5" y="556" font-size="11.5" fill="#444" font-weight="normal" text-anchor="start" transform="rotate(-90 1487.5 556)">SKETCH PALETTE</text>
<rect x="1411.5" y="221.5" width="52" height="52" rx="2" fill="#eeeeee" stroke="#a9a9a9"/>
<rect x="1421" y="231" width="33" height="33" fill="#e4e5e8" />
<text x="1437.5" y="252" font-size="12" fill="#8e9094" font-weight="normal" text-anchor="middle" transform="translate(1437.5 0) scale(0.92 1) translate(-1437.5 0)">TOP</text>
<rect x="604" y="919" width="296" height="30" fill="#efefef" />
<rect x="0" y="181" width="1501" height="3" fill="#f2f2f2" />
<rect x="1498.5" y="78" width="1" height="103" fill="#d0d0d0" />
<rect x="1499.5" y="38" width="1.5" height="919" fill="#f0f2f6" />
<rect x="0" y="0" width="1501" height="1" fill="#5a5a5a" />
<rect x="0" y="0" width="1" height="1020" fill="#5a5a5a" />
<rect x="0" y="1018" width="1501" height="2" fill="#5a5a5a" /><path d="M11.1,10.9 L14,9.1 V23.9 H11.1 Z" fill="#ff9a4c"/>
<path d="M14,9.1 H26.8 Q27.6,9.1 27.9,10 L28.9,12.2 V28.7 H14 Z" fill="#ff6c05"/>
<path d="M27.4,11 L28.9,12.2 V28.7 H27.4 Z" fill="#b54c06"/>
<path d="M12.8,23 H28.9 V28.7 H13.8 Q12.8,28.7 12.8,27.7 Z" fill="#a54306"/>
<path d="M19,12.4 H23.3 V14.2 H20.9 V15.4 H23 V17.1 H20.9 V19.9 H19 Z" fill="#fff"/>
<text x="20.8" y="27.9" font-size="4.6" font-weight="bold" fill="#e8b898" text-anchor="middle">360</text>
<path d="M1348,18.5 H1360" stroke="#111" stroke-width="1.1"/>
<rect x="1406.5" y="13.5" width="11" height="11" fill="none" stroke="#111" stroke-width="1.1"/>
<path d="M1465,13 L1477,25 M1477,13 L1465,25" stroke="#111" stroke-width="1.2"/>
<rect x="12.0" y="49.0" width="5" height="5" rx="0.8" fill="#6b6b6b"/>
<rect x="12.0" y="55.5" width="5" height="5" rx="0.8" fill="#6b6b6b"/>
<rect x="12.0" y="62.0" width="5" height="5" rx="0.8" fill="#6b6b6b"/>
<rect x="18.5" y="49.0" width="5" height="5" rx="0.8" fill="#6b6b6b"/>
<rect x="18.5" y="55.5" width="5" height="5" rx="0.8" fill="#6b6b6b"/>
<rect x="18.5" y="62.0" width="5" height="5" rx="0.8" fill="#6b6b6b"/>
<rect x="25.0" y="49.0" width="5" height="5" rx="0.8" fill="#6b6b6b"/>
<rect x="25.0" y="55.5" width="5" height="5" rx="0.8" fill="#6b6b6b"/>
<rect x="25.0" y="62.0" width="5" height="5" rx="0.8" fill="#6b6b6b"/>
<path d="M53.5,49 Q53.5,48 54.5,48 H65 L70,53 V67 Q70,68 69,68 H54.5 Q53.5,68 53.5,67 Z" fill="#6b6b6b"/>
<path d="M65,48 V53 H70" fill="#cbcbcb"/>
<path d="M65.5,48 L70,52.5 H65.5 Z" fill="#6b6b6b"/>
<path d="M77,56 h9 l-4.5,5.5 z" fill="#6b6b6b"/>
<path d="M110,50 Q110,49.1 111,49.1 H126.1 Q127.1,49.1 127.1,50.1 V65.8 Q127.1,66.8 126.1,66.8 H113.8 L110,63 Z" fill="#6b6b6b"/>
<path d="M114.3,49.8 V56.1 H122.9 V49.8" fill="none" stroke="#b8b8b8" stroke-width="1.3"/>
<path d="M115.9,66.8 V61.1 H121.4 V66.8" fill="none" stroke="#c4c4c4" stroke-width="1.3"/>
<path d="M166,65.5 Q166,56 156,56 H153" fill="none" stroke="#6b6b6b" stroke-width="2.6" stroke-linecap="round"/>
<path d="M158,51.5 L152.5,56 L158,60.5" fill="none" stroke="#6b6b6b" stroke-width="2.6" stroke-linecap="round" stroke-linejoin="round"/>
<path d="M176,56 h9 l-4.5,5.5 z" fill="#6b6b6b"/>
<path d="M201.5,65.5 Q201.5,56 211.5,56 H214.5" fill="none" stroke="#9c9c9c" stroke-width="2.6" stroke-linecap="round"/>
<path d="M209.5,51.5 L215,56 L209.5,60.5" fill="none" stroke="#9c9c9c" stroke-width="2.6" stroke-linecap="round" stroke-linejoin="round"/>
<path d="M225,56 h9 l-4.5,5.5 z" fill="#9c9c9c"/>
<path d="M683.5,52.5 L692,57 V67 L683.5,71.5 L675,67 V57 Z" fill="#ff7a1a"/>
<path d="M683.5,52.5 L692,57 L683.5,61.5 L675,57 Z" fill="#ffc79a"/>
<path d="M683.5,61.5 L692,57 V67 L683.5,71.5 Z" fill="#ff6a00"/>
<path d="M675,57 L683.5,61.5 V71.5 L675,67 Z" fill="#ff8f3f"/>
<path d="M1246.5,60 H1264 M1255.2,51.3 V68.7" stroke="#7a7a7a" stroke-width="3.4"/>
<defs><clipPath id="plugc"><circle cx="1297" cy="58" r="9.9"/></clipPath></defs>
<circle cx="1297" cy="58" r="9.8" fill="#6b6b6b"/>
<g clip-path="url(#plugc)"><g transform="rotate(45 1297 58)">
<rect x="1292" y="55.5" width="10" height="8" rx="2.5" fill="#cbcbcb"/>
<rect x="1291" y="60" width="12" height="3" fill="#cbcbcb"/>
<rect x="1293.8" y="49.5" width="2" height="7" fill="#cbcbcb"/><rect x="1298.2" y="49.5" width="2" height="7" fill="#cbcbcb"/>
<rect x="1295.3" y="62" width="3.4" height="9" fill="#cbcbcb"/>
</g></g>
<circle cx="1338.4" cy="58" r="9.6" fill="none" stroke="#6b6b6b" stroke-width="1"/>
<circle cx="1338.4" cy="58" r="8" fill="#6b6b6b"/>
<path d="M1337.5,52.5 V58.8 H1343" fill="none" stroke="#cbcbcb" stroke-width="1.5"/>
<path d="M1379.7,48.5 Q1380.8,48.5 1380.8,50 Q1385.5,51.5 1385.5,57 V61.5 L1388,64.5 H1371.5 L1374,61.5 V57 Q1374,51.5 1378.6,50 Q1378.6,48.5 1379.7,48.5 Z" fill="#6b6b6b"/>
<path d="M1377.5,65.5 H1382 Q1381.5,67.8 1379.7,67.8 Q1378,67.8 1377.5,65.5 Z" fill="#6b6b6b"/>
<circle cx="1385" cy="52.7" r="4.2" fill="#0e9be0"/>
<circle cx="1421" cy="58" r="10" fill="#6b6b6b"/>
<path d="M1417.3,55 Q1417.3,51.2 1421,51.2 Q1424.8,51.2 1424.8,54.6 Q1424.8,56.5 1422.5,57.6 Q1421,58.4 1421,60.3" fill="none" stroke="#cbcbcb" stroke-width="2.3"/>
<rect x="1419.6" y="62" width="2.8" height="2.6" fill="#cbcbcb"/>
<defs><linearGradient id="avg" x1="0" y1="0" x2="0" y2="1"><stop offset="0" stop-color="#7f93b3"/><stop offset="1" stop-color="#b4c3d8"/></linearGradient><clipPath id="avc"><circle cx="1469.5" cy="58" r="14.8"/></clipPath></defs>
<circle cx="1469.5" cy="58" r="14.8" fill="url(#avg)"/>
<g clip-path="url(#avc)"><ellipse cx="1469.5" cy="53" rx="7.2" ry="8.5" fill="#56647a"/><path d="M1466,59 H1473 V63 Q1480,64.5 1484,69 V75 H1455 V69 Q1459,64.5 1466,63 Z" fill="#56647a"/></g><path d="M174,141 H199" stroke="#6e6e6e" stroke-width="1.3"/>
<path d="M199,122 A9.5,9.5 0 0,1 199,141" fill="none" stroke="#6e6e6e" stroke-width="1.3"/>
<rect x="172.2" y="139.2" width="3.6" height="3.6" fill="#1a8fe8"/>
<rect x="197.2" y="139.2" width="3.6" height="3.6" fill="#1a8fe8"/>
<rect x="197.2" y="120.2" width="3.6" height="3.6" fill="#1a8fe8"/>
<rect x="228" y="118.5" width="34.5" height="25" fill="none" stroke="#6e6e6e" stroke-width="1.3"/>
<rect x="226.2" y="116.7" width="3.6" height="3.6" fill="#1a8fe8"/>
<rect x="260.7" y="141.7" width="3.6" height="3.6" fill="#1a8fe8"/>
<circle cx="299" cy="131" r="18.6" fill="none" stroke="#6e6e6e" stroke-width="1.3"/>
<path d="M288,142 L310,120" stroke="#1a8fe8" stroke-width="1.5"/>
<path d="M303.5,120 H310.5 V127 Z M287.5,135 V142.5 H294.5 Z" fill="#1a8fe8"/>
<rect x="297.3" y="129.3" width="3.4" height="3.4" fill="#1a8fe8"/>
<path d="M335,150 C335,138 338,125 343,125 C350,125 356,139 364,139 C370,139 372,125 372,113.5" fill="none" stroke="#6e6e6e" stroke-width="1.3"/>
<rect x="333.2" y="148.2" width="3.6" height="3.6" fill="#1a8fe8"/>
<rect x="341.2" y="123.2" width="3.6" height="3.6" fill="#1a8fe8"/>
<rect x="362.2" y="137.2" width="3.6" height="3.6" fill="#1a8fe8"/>
<rect x="370.2" y="111.7" width="3.6" height="3.6" fill="#1a8fe8"/>
<path d="M388,149.5 L406,114 V149.5 Z" fill="none" stroke="#6e6e6e" stroke-width="1.3" stroke-linejoin="miter"/>
<path d="M408,114 L425,149.5 H408 Z" fill="none" stroke="#1a8fe8" stroke-width="1.4"/>
<path d="M455.5,137 V151.5 M480,112.5 H495" stroke="#6e6e6e" stroke-width="1.3"/>
<path d="M455.5,136 A23.5,23.5 0 0,1 479,112.5" fill="none" stroke="#1a8fe8" stroke-width="1.5"/>
<path d="M508.5,114.8 H513.5 M516,114.8 H521 M523.5,114.8 H528.5" stroke="#3aa0ea" stroke-width="2"/>
<path d="M538.5,114.8 H548.5" stroke="#7a7a7a" stroke-width="2"/>
<path d="M531.1,111.9 L536,117 V135 L533,137.5 L531.1,135 Z" fill="#333"/>
<path d="M518.6,119.2 L531.3,132 V136.5 L529.5,137.8 L518.6,126.6 Z" fill="#333"/>
<circle cx="533" cy="136.4" r="3.4" fill="#333"/><path d="M531.5,137 L530,140.5 M534.5,137 L538,139.5" stroke="#333" stroke-width="2.4"/>
<circle cx="533" cy="136.2" r="1.7" fill="#f1f1f1"/>
<ellipse cx="531" cy="145" rx="3.6" ry="5.6" fill="none" stroke="#333" stroke-width="2"/>
<ellipse cx="541.6" cy="141.4" rx="3.8" ry="5.4" fill="none" stroke="#333" stroke-width="2" transform="rotate(-40 541.6 141.4)"/>
<path d="M602,117 H578 A14.5,14.5 0 0,0 578,146 H602" fill="none" stroke="#1a8fe8" stroke-width="1.6"/>
<path d="M602,123.5 H578 A8,8 0 0,0 578,139.5 H602" fill="none" stroke="#6e6e6e" stroke-width="1.4"/>
<path d="M616.5,151.5 C617,145 618,138 620,133" fill="none" stroke="#6e6e6e" stroke-width="1.3"/>
<path d="M620,133 C624,121 630,122 636,131 C642,140 650,142 653,133" fill="none" stroke="#1a8fe8" stroke-width="1.5"/>
<path d="M653,133 C655,126 656,119 656,112" fill="none" stroke="#6e6e6e" stroke-width="1.3"/>
<path d="M705.5,114 V135 M692,140 H713.5" stroke="#6e6e6e" stroke-width="1.6"/>
<path d="M697,115 L703,120 M697,120.5 L703,125.5 M697,126 L703,131 M697,131.5 L702,135.5" stroke="#d42a2a" stroke-width="1.4"/>
<path d="M693,148.5 L697,143.5 M699,148.5 L703,143.5 M705,148.5 L709,143.5 M692,143.5 H713.5" stroke="#d42a2a" stroke-width="1.4"/>
<path d="M739,112 V149" stroke="#d42a2a" stroke-width="1.4"/>
<rect x="737" y="148" width="4" height="4" fill="#d42a2a"/>
<path d="M742,150 H777" stroke="#6e6e6e" stroke-width="1.4"/>
<circle cx="806" cy="135.8" r="15" fill="none" stroke="#d42a2a" stroke-width="1.4"/>
<path d="M805,113 L829.5,137" stroke="#6e6e6e" stroke-width="1.4"/>
<rect x="852" y="123" width="25.5" height="4.5" fill="#d42a2a"/>
<rect x="852" y="135.5" width="25.5" height="4.5" fill="#5f5f5f"/>
<path d="M903,140 L927,117 M910,146.5 L933,124" stroke="#d42a2a" stroke-width="1.4"/>
<path d="M910,146.5 L933,124" stroke="#6e6e6e" stroke-width="1.4"/>
<path d="M987.5,121.5 V132.5 M1022,121.5 V132.5 M988.5,127 H1021" stroke="#6e6e6e" stroke-width="1.3"/>
<path d="M988,127 L993.5,124 V130 Z M1021.5,127 L1016,124 V130 Z" fill="#6e6e6e"/>
<rect x="987" y="134" width="35.5" height="7.5" fill="#ffaa00"/>
<path d="M990.5,134 V136.5 M994.5,134 V137.5 M998.5,134 V136.5 M1002.5,134 V137.5 M1006.5,134 V136.5 M1010.5,134 V137.5 M1014.5,134 V136.5 M1018.5,134 V137.5" stroke="#8a6a20" stroke-width="1"/>
<path d="M1079.5,112.5 H1098 L1110.5,125 V151.5 H1079.5 Z" fill="#f4f4f4" stroke="#6e6e6e" stroke-width="1.2"/>
<path d="M1098.5,112.5 L1110.5,124.5 H1098.5 Z" fill="#e8a41e"/>
<rect x="1079" y="135.5" width="32" height="16" fill="#e8a41e"/>
<circle cx="1085.5" cy="143.5" r="4.8" fill="none" stroke="#3a2a00" stroke-width="1.2"/>
<path d="M1085.5,139.5 V147.5 M1081.5,143.5 H1089.5 M1082.7,140.7 L1088.3,146.3 M1088.3,140.7 L1082.7,146.3" stroke="#3a2a00" stroke-width="0.9"/>
<text x="1100.5" y="148" font-size="10.5" font-weight="bold" fill="#fff" text-anchor="middle" font-family="Liberation Mono">SVG</text>
<path d="M1071,124 H1082 V119 L1093,124 L1082,129 V124 Z" fill="#1e88e5"/>
<path d="M1071,121.5 H1083 V126.5 H1071 Z M1082,118.5 L1093,124 L1082,129.5 Z" fill="#1e88e5"/>
<path d="M1134.5,121 L1141.5,114 H1163 V142 L1156,148.5 H1134.5 Z" fill="#fff" stroke="#555" stroke-width="1.3"/>
<path d="M1156,121 V148.5 L1163,142 V114 Z" fill="#d8d8d8"/>
<path d="M1134.5,121 H1156 L1163,114" fill="none" stroke="#555" stroke-width="1.1"/>
<path d="M1156,121 V148.5 M1134.5,121 V148.5" stroke="#555" stroke-width="1.1"/>
<path d="M1134.5,121 H1156 V148.5 H1134.5 Z" fill="#e8e8e8"/>
<path d="M1134.5,121 L1141.5,114 H1163 L1156,121 Z" fill="#f8f8f8" stroke="#555" stroke-width="1.1"/>
<path d="M1156,121 L1163,114 V142 L1156,148.5 Z" fill="#cfcfcf" stroke="#555" stroke-width="1.1"/>
<rect x="1134.5" y="121" width="21.5" height="27.5" fill="#ececec" stroke="#555" stroke-width="1.1"/>
<path d="M1127,143 Q1129,135 1139,134 V130 L1147,137 L1139,144 V140 Q1132,140 1127,143 Z" fill="#3f3f3f"/>
<rect x="1180" y="113" width="36" height="36" fill="#7ec3f7"/>
<path d="M1180,135 Q1186,127 1192,130 Q1198,133 1202,140 Q1207,135 1212,138 L1216,142 V149 H1180 Z" fill="#3a8fcf"/>
<circle cx="1205.5" cy="123" r="3.5" fill="#fff8c0"/>
<rect x="1261.5" y="112.5" width="34" height="27" fill="none" stroke="#35b34a" stroke-width="1.3" stroke-dasharray="3 2"/>
<path d="M1287,130 V147 L1290.5,143.5 L1293.5,150 L1296,149 L1293,142.5 L1298,142.5 Z" fill="#f4f4f4" stroke="#555" stroke-width="1.1" stroke-linejoin="round"/>
<circle cx="1404.8" cy="131.7" r="19.2" fill="#64c400"/>
<path d="M1394,131.5 L1401.5,139 L1415.5,125" fill="none" stroke="#fff" stroke-width="5"/><defs><linearGradient id="tg" x1="0" y1="0" x2="1" y2="1"><stop offset="0" stop-color="#e6e6e6"/><stop offset="1" stop-color="#555"/></linearGradient></defs>
<path d="M40.2,232 V245.5 H27 Z" fill="url(#tg)" stroke="#333" stroke-width="1.3" stroke-linejoin="round"/>
<rect x="51" y="226.5" width="6" height="24.8" fill="#e8983e"/>
<path d="M61,239 Q71,227 81,239 Q71,251 61,239 Z" fill="#a3a3a3"/>
<circle cx="71" cy="239" r="3.8" fill="none" stroke="#d9d9d9" stroke-width="1.2"/>
<g transform="translate(-22.80,-240.20)">
<path d="M115.7,473.8 L119.6,469.9 H126.4 V476.9 H131 Q134.1,476.9 134.1,480 V484.6 L130.5,488.2 H117.2 Q115.7,488.2 115.7,486.7 Z" fill="#e6e8ec" stroke="#3a3a3a" stroke-width="1.4" stroke-linejoin="round"/>
<path d="M116.5,474.2 H122.6 L126,470.6 M123,488 V481 L126.4,477.4 H133.5" fill="none" stroke="#fbfbfb" stroke-width="1.1"/>
<path d="M122.6,488.2 V480.8 L126.4,477" fill="none" stroke="#3a3a3a" stroke-width="1.2"/>
<path d="M116.3,481 H122.3" stroke="#fafafa" stroke-width="1"/>
<rect x="117" y="475.5" width="5" height="5" fill="#dcdfe4"/><rect x="124" y="482" width="6" height="5" fill="#dcdfe4"/>
</g>
<circle cx="228" cy="239" r="8" fill="#e8901e"/>
<text x="227.6" y="243.6" font-size="12.5" fill="#fff" text-anchor="middle">C</text>
<circle cx="232.5" cy="243.5" r="2.4" fill="#fff" stroke="#444" stroke-width="0.9"/>
<path d="M52,261.2 L62,269 L52,276.8 Z" fill="#e2e4e8" stroke="#3a3a3a" stroke-width="1.6" stroke-linejoin="round"/>
<path d="M86.12,259.05 L88.08,259.05 L89.19,262.11 L90.49,262.65 L93.44,261.27 L94.83,262.66 L93.45,265.61 L93.99,266.91 L97.05,268.02 L97.05,269.98 L93.99,271.09 L93.45,272.39 L94.83,275.34 L93.44,276.73 L90.49,275.35 L89.19,275.89 L88.08,278.95 L86.12,278.95 L85.01,275.89 L83.71,275.35 L80.76,276.73 L79.37,275.34 L80.75,272.39 L80.21,271.09 L77.15,269.98 L77.15,268.02 L80.21,266.91 L80.75,265.61 L79.37,262.66 L80.76,261.27 L83.71,262.65 L85.01,262.11 Z" fill="#a0a0a0"/>
<circle cx="87.1" cy="269" r="3.6" fill="#efefef"/>
<path d="M52,291.2 L62,299 L52,306.8 Z" fill="#e2e4e8" stroke="#3a3a3a" stroke-width="1.6" stroke-linejoin="round"/>
<path d="M77,290.5 H86 L87.5,292.3 H97 V307.0 H77 Z" fill="#9c9c9c"/>
<path d="M77,293.5 H86.5 L88.5,292.0" stroke="#efefef" stroke-width="1.1" fill="none"/>
<path d="M52,321.2 L62,329 L52,336.8 Z" fill="#e2e4e8" stroke="#3a3a3a" stroke-width="1.6" stroke-linejoin="round"/>
<path d="M77.5,329 Q87,318 96.5,329 Q87,340 77.5,329 Z" fill="none" stroke="#b0b0b0" stroke-width="1.3"/>
<path d="M83.5,327 A4,4 0 0,0 88,333" fill="none" stroke="#b8b8b8" stroke-width="1.3"/>
<path d="M80,321 L94.5,336.5" stroke="#9a9a9a" stroke-width="1"/>
<path d="M108.5,320.5 H117.5 L119.0,322.3 H128.5 V337.0 H108.5 Z" fill="#9c9c9c"/>
<path d="M108.5,323.5 H118.0 L120.0,322.0" stroke="#efefef" stroke-width="1.1" fill="none"/>
<path d="M52,351.2 L62,359 L52,366.8 Z" fill="#e2e4e8" stroke="#3a3a3a" stroke-width="1.6" stroke-linejoin="round"/>
<path d="M77.5,359 Q87,348 96.5,359 Q87,370 77.5,359 Z" fill="none" stroke="#b0b0b0" stroke-width="1.3"/>
<path d="M83.5,357 A4,4 0 0,0 88,363" fill="none" stroke="#b8b8b8" stroke-width="1.3"/>
<path d="M80,351 L94.5,366.5" stroke="#9a9a9a" stroke-width="1"/>
<path d="M108.5,350.5 H117.5 L119.0,352.3 H128.5 V367.0 H108.5 Z" fill="#9c9c9c"/>
<path d="M108.5,353.5 H118.0 L120.0,352.0" stroke="#efefef" stroke-width="1.1" fill="none"/>
<path d="M52,381.2 L62,389 L52,396.8 Z" fill="#e2e4e8" stroke="#3a3a3a" stroke-width="1.6" stroke-linejoin="round"/>
<path d="M77.5,389 Q87,378 96.5,389 Q87,400 77.5,389 Z" fill="none" stroke="#b0b0b0" stroke-width="1.3"/>
<path d="M83.5,387 A4,4 0 0,0 88,393" fill="none" stroke="#b8b8b8" stroke-width="1.3"/>
<path d="M80,381 L94.5,396.5" stroke="#9a9a9a" stroke-width="1"/>
<path d="M108.5,380.5 H117.5 L119.0,382.3 H128.5 V397.0 H108.5 Z" fill="#9c9c9c"/>
<path d="M108.5,383.5 H118.0 L120.0,382.0" stroke="#efefef" stroke-width="1.1" fill="none"/>
<path d="M52,411.2 L62,419 L52,426.8 Z" fill="#e2e4e8" stroke="#3a3a3a" stroke-width="1.6" stroke-linejoin="round"/>
<rect x="73.6" y="406.7" width="6" height="24.5" fill="#4650d8"/>
<path d="M83.3,419 Q93.3,407 103.3,419 Q93.3,431 83.3,419 Z" fill="#a3a3a3"/>
<circle cx="93.3" cy="419" r="3.8" fill="none" stroke="#d9d9d9" stroke-width="1.2"/>
<path d="M115.8,413.5 L119.6,409.7 H134.4 V424.5 L130.6,428.3 H115.8 Z" fill="#e3e5e9" stroke="#3d3d3d" stroke-width="1.3" stroke-linejoin="round"/>
<path d="M116.6,413.5 H130.6 L134.1,410" fill="none" stroke="#fafafa" stroke-width="1.3"/>
<path d="M130.6,414.5 V428" stroke="#f7f7f7" stroke-width="1.2"/>
<path d="M125,417.5 h6 v1.5 l-1.5,1 v2.5 l2,1.5 v1.2 h-7 v-1.2 l2,-1.5 v-2.5 l-1.5,-1 z" fill="#f07a20" stroke="#c04010" stroke-width="0.6"/>
<path d="M111.00,429.8 l3.6,-3.6 M118.45,429.8 l3.6,-3.6 M125.90,429.8 l3.6,-3.6 M133.35,429.8 l3.6,-3.6 M140.80,429.8 l3.6,-3.6 M148.25,429.8 l3.6,-3.6 M155.70,429.8 l3.6,-3.6 M163.15,429.8 l3.6,-3.6 M170.60,429.8 l3.6,-3.6 M178.05,429.8 l3.6,-3.6 M185.50,429.8 l3.6,-3.6 M192.95,429.8 l3.6,-3.6 M200.40,429.8 l3.6,-3.6 M207.85,429.8 l3.6,-3.6 " stroke="#6a86b0" stroke-width="2.2" stroke-linecap="butt"/>
<path d="M52,441.2 L62,449 L52,456.8 Z" fill="#e2e4e8" stroke="#3a3a3a" stroke-width="1.6" stroke-linejoin="round"/>
<rect x="73.6" y="436.7" width="6" height="24.5" fill="#f7a9b1"/>
<path d="M83.3,449 Q93.3,437 103.3,449 Q93.3,461 83.3,449 Z" fill="#a3a3a3"/>
<circle cx="93.3" cy="449" r="3.8" fill="none" stroke="#d9d9d9" stroke-width="1.2"/>
<path d="M115.8,443.5 L119.6,439.7 H134.4 V454.5 L130.6,458.3 H115.8 Z" fill="#e3e5e9" stroke="#3d3d3d" stroke-width="1.3" stroke-linejoin="round"/>
<path d="M116.6,443.5 H130.6 L134.1,440" fill="none" stroke="#fafafa" stroke-width="1.3"/>
<path d="M130.6,444.5 V458" stroke="#f7f7f7" stroke-width="1.2"/>
<g transform="translate(156,449) rotate(-45)" fill="none" stroke="#3a3a3a" stroke-width="2.7" stroke-linecap="round"><path d="M-2.2,-3.3 H-9.3 A3.3,3.3 0 0,0 -9.3,3.3 H-1.7 A3.3,3.3 0 0,0 1.5,0.6"/><path d="M2.2,3.3 H9.3 A3.3,3.3 0 0,0 9.3,-3.3 H1.7 A3.3,3.3 0 0,0 -1.5,-0.6"/></g>
<path d="M52,471.2 L62,479 L52,486.8 Z" fill="#e2e4e8" stroke="#3a3a3a" stroke-width="1.6" stroke-linejoin="round"/>
<rect x="73.6" y="466.7" width="6" height="24.5" fill="#e08ae3"/>
<path d="M83.3,479 Q93.3,467 103.3,479 Q93.3,491 83.3,479 Z" fill="#a3a3a3"/>
<circle cx="93.3" cy="479" r="3.8" fill="none" stroke="#d9d9d9" stroke-width="1.2"/>
<g transform="translate(0.10,-0.20)">
<path d="M115.7,473.8 L119.6,469.9 H126.4 V476.9 H131 Q134.1,476.9 134.1,480 V484.6 L130.5,488.2 H117.2 Q115.7,488.2 115.7,486.7 Z" fill="#e6e8ec" stroke="#3a3a3a" stroke-width="1.4" stroke-linejoin="round"/>
<path d="M116.5,474.2 H122.6 L126,470.6 M123,488 V481 L126.4,477.4 H133.5" fill="none" stroke="#fbfbfb" stroke-width="1.1"/>
<path d="M122.6,488.2 V480.8 L126.4,477" fill="none" stroke="#3a3a3a" stroke-width="1.2"/>
<path d="M116.3,481 H122.3" stroke="#fafafa" stroke-width="1"/>
<rect x="117" y="475.5" width="5" height="5" fill="#dcdfe4"/><rect x="124" y="482" width="6" height="5" fill="#dcdfe4"/>
</g>
<g transform="translate(156,479) rotate(-45)" fill="none" stroke="#3a3a3a" stroke-width="2.7" stroke-linecap="round"><path d="M-2.2,-3.3 H-9.3 A3.3,3.3 0 0,0 -9.3,3.3 H-1.7 A3.3,3.3 0 0,0 1.5,0.6"/><path d="M2.2,3.3 H9.3 A3.3,3.3 0 0,0 9.3,-3.3 H1.7 A3.3,3.3 0 0,0 -1.5,-0.6"/></g>
<path d="M52,501.2 L62,509 L52,516.8 Z" fill="#e2e4e8" stroke="#3a3a3a" stroke-width="1.6" stroke-linejoin="round"/>
<rect x="73.6" y="496.7" width="6" height="24.5" fill="#e08ae3"/>
<path d="M83.3,509 Q93.3,497 103.3,509 Q93.3,521 83.3,509 Z" fill="#a3a3a3"/>
<circle cx="93.3" cy="509" r="3.8" fill="none" stroke="#d9d9d9" stroke-width="1.2"/>
<g transform="translate(0.10,29.80)">
<path d="M115.7,473.8 L119.6,469.9 H126.4 V476.9 H131 Q134.1,476.9 134.1,480 V484.6 L130.5,488.2 H117.2 Q115.7,488.2 115.7,486.7 Z" fill="#e6e8ec" stroke="#3a3a3a" stroke-width="1.4" stroke-linejoin="round"/>
<path d="M116.5,474.2 H122.6 L126,470.6 M123,488 V481 L126.4,477.4 H133.5" fill="none" stroke="#fbfbfb" stroke-width="1.1"/>
<path d="M122.6,488.2 V480.8 L126.4,477" fill="none" stroke="#3a3a3a" stroke-width="1.2"/>
<path d="M116.3,481 H122.3" stroke="#fafafa" stroke-width="1"/>
<rect x="117" y="475.5" width="5" height="5" fill="#dcdfe4"/><rect x="124" y="482" width="6" height="5" fill="#dcdfe4"/>
</g>
<g transform="translate(156,509) rotate(-45)" fill="none" stroke="#3a3a3a" stroke-width="2.7" stroke-linecap="round"><path d="M-2.2,-3.3 H-9.3 A3.3,3.3 0 0,0 -9.3,3.3 H-1.7 A3.3,3.3 0 0,0 1.5,0.6"/><path d="M2.2,3.3 H9.3 A3.3,3.3 0 0,0 9.3,-3.3 H1.7 A3.3,3.3 0 0,0 -1.5,-0.6"/></g>
<path d="M52,531.2 L62,539 L52,546.8 Z" fill="#e2e4e8" stroke="#3a3a3a" stroke-width="1.6" stroke-linejoin="round"/>
<rect x="73.6" y="526.7" width="6" height="24.5" fill="#e9c85a"/>
<path d="M83.3,539 Q93.3,527 103.3,539 Q93.3,551 83.3,539 Z" fill="#a3a3a3"/>
<circle cx="93.3" cy="539" r="3.8" fill="none" stroke="#d9d9d9" stroke-width="1.2"/>
<g transform="translate(0.10,59.80)">
<path d="M115.7,473.8 L119.6,469.9 H126.4 V476.9 H131 Q134.1,476.9 134.1,480 V484.6 L130.5,488.2 H117.2 Q115.7,488.2 115.7,486.7 Z" fill="#e6e8ec" stroke="#3a3a3a" stroke-width="1.4" stroke-linejoin="round"/>
<path d="M116.5,474.2 H122.6 L126,470.6 M123,488 V481 L126.4,477.4 H133.5" fill="none" stroke="#fbfbfb" stroke-width="1.1"/>
<path d="M122.6,488.2 V480.8 L126.4,477" fill="none" stroke="#3a3a3a" stroke-width="1.2"/>
<path d="M116.3,481 H122.3" stroke="#fafafa" stroke-width="1"/>
<rect x="117" y="475.5" width="5" height="5" fill="#dcdfe4"/><rect x="124" y="482" width="6" height="5" fill="#dcdfe4"/>
</g>
<g transform="translate(156,539) rotate(-45)" fill="none" stroke="#3a3a3a" stroke-width="2.7" stroke-linecap="round"><path d="M-2.2,-3.3 H-9.3 A3.3,3.3 0 0,0 -9.3,3.3 H-1.7 A3.3,3.3 0 0,0 1.5,0.6"/><path d="M2.2,3.3 H9.3 A3.3,3.3 0 0,0 9.3,-3.3 H1.7 A3.3,3.3 0 0,0 -1.5,-0.6"/></g>
<path d="M52,561.2 L62,569 L52,576.8 Z" fill="#e2e4e8" stroke="#3a3a3a" stroke-width="1.6" stroke-linejoin="round"/>
<rect x="73.6" y="556.7" width="6" height="24.5" fill="#e9c85a"/>
<path d="M83.3,569 Q93.3,557 103.3,569 Q93.3,581 83.3,569 Z" fill="#a3a3a3"/>
<circle cx="93.3" cy="569" r="3.8" fill="none" stroke="#d9d9d9" stroke-width="1.2"/>
<g transform="translate(0.10,89.80)">
<path d="M115.7,473.8 L119.6,469.9 H126.4 V476.9 H131 Q134.1,476.9 134.1,480 V484.6 L130.5,488.2 H117.2 Q115.7,488.2 115.7,486.7 Z" fill="#e6e8ec" stroke="#3a3a3a" stroke-width="1.4" stroke-linejoin="round"/>
<path d="M116.5,474.2 H122.6 L126,470.6 M123,488 V481 L126.4,477.4 H133.5" fill="none" stroke="#fbfbfb" stroke-width="1.1"/>
<path d="M122.6,488.2 V480.8 L126.4,477" fill="none" stroke="#3a3a3a" stroke-width="1.2"/>
<path d="M116.3,481 H122.3" stroke="#fafafa" stroke-width="1"/>
<rect x="117" y="475.5" width="5" height="5" fill="#dcdfe4"/><rect x="124" y="482" width="6" height="5" fill="#dcdfe4"/>
</g>
<g transform="translate(156,569) rotate(-45)" fill="none" stroke="#3a3a3a" stroke-width="2.7" stroke-linecap="round"><path d="M-2.2,-3.3 H-9.3 A3.3,3.3 0 0,0 -9.3,3.3 H-1.7 A3.3,3.3 0 0,0 1.5,0.6"/><path d="M2.2,3.3 H9.3 A3.3,3.3 0 0,0 9.3,-3.3 H1.7 A3.3,3.3 0 0,0 -1.5,-0.6"/></g>
<path d="M52,591.2 L62,599 L52,606.8 Z" fill="#e2e4e8" stroke="#3a3a3a" stroke-width="1.6" stroke-linejoin="round"/>
<rect x="75.8" y="587" width="3.6" height="24.5" fill="#d8dc4a"/>
<rect x="75.3" y="586.8" width="4.5" height="24.9" fill="none" stroke="#eceec0" stroke-width="0.6"/>
<path d="M83.3,599 Q93.3,587 103.3,599 Q93.3,611 83.3,599 Z" fill="#a3a3a3"/>
<circle cx="93.3" cy="599" r="3.8" fill="none" stroke="#d9d9d9" stroke-width="1.2"/>
<path d="M115.8,593.5 L119.6,589.7 H134.4 V604.5 L130.6,608.3 H115.8 Z" fill="#e3e5e9" stroke="#3d3d3d" stroke-width="1.3" stroke-linejoin="round"/>
<path d="M116.6,593.5 H130.6 L134.1,590" fill="none" stroke="#fafafa" stroke-width="1.3"/>
<path d="M130.6,594.5 V608" stroke="#f7f7f7" stroke-width="1.2"/>
<circle cx="211.5" cy="599" r="8" fill="none" stroke="#3d3d3d" stroke-width="1.3"/>
<circle cx="211.5" cy="599" r="2.8" fill="#2d2d2d"/>
<path d="M12.5,205.5 L18.5,202 V209 Z M18.5,205.5 L24.5,202 V209 Z" fill="#2a2a2a"/>
<rect x="12" y="204" width="1.5" height="3" fill="#777"/>
<circle cx="360.5" cy="204.5" r="5.3" fill="#2a2a2a"/><rect x="357" y="203.7" width="7" height="1.7" fill="#fff"/>
<circle cx="360.5" cy="935.5" r="5.3" fill="#2a2a2a"/><rect x="357" y="934.7" width="7" height="1.7" fill="#fff"/><rect x="359.65" y="932" width="1.7" height="7" fill="#fff"/><circle cx="1171.6" cy="354.6" r="5.5" fill="#2a2a2a"/><rect x="1168" y="353.8" width="7.2" height="1.7" fill="#fff"/>
<path d="M1445,352.5 L1451,355.5 L1445,358.5 Z M1451,352.5 L1457,355.5 L1451,358.5 Z" fill="#2a2a2a"/><rect x="1456.5" y="354" width="1.3" height="3" fill="#777"/>
<path d="M1488,348.5 L1482,352.5 L1488,356.5 Z M1482,348.5 L1476,352.5 L1482,356.5 Z" fill="#2a2a2a"/>
<path d="M1285.5,380.5 V396 L1289,392.5 L1292,398.5 L1294.5,397.5 L1291.5,391.5 L1296.5,391.5 Z" fill="#d8d8d8" stroke="#666" stroke-width="1" stroke-linejoin="round"/>
<path d="M1386,384.5 L1395.5,394 M1395.5,384.5 L1386,394" stroke="#555" stroke-width="2.4"/>
<rect x="1281.6" y="418.4" width="13.9" height="11.2" fill="#d9b4f7" stroke="#7a3aa8" stroke-width="1" stroke-dasharray="2 1"/>
<rect x="1284" y="420.5" width="6" height="7" fill="#c890f0" opacity="0.6"/>
<circle cx="1281.6" cy="418.4" r="1.7" fill="#fff" stroke="#7a2a9a" stroke-width="1.1"/>
<circle cx="1295.5" cy="418.4" r="1.7" fill="#fff" stroke="#7a2a9a" stroke-width="1.1"/>
<circle cx="1281.6" cy="429.6" r="1.7" fill="#fff" stroke="#7a2a9a" stroke-width="1.1"/>
<path d="M1290.6,422 V434.2 L1293.2,431.8 L1295.2,436.5 L1297,435.7 L1295,431 L1298.6,431 Z" fill="#fff" stroke="#111" stroke-width="1" stroke-linejoin="round"/>
<defs><linearGradient id="cylg" x1="0" x2="1"><stop offset="0" stop-color="#f4f4f4"/><stop offset="0.4" stop-color="#dcdcdc"/><stop offset="1" stop-color="#b8b8b8"/></linearGradient></defs>
<path d="M1316.5,418.5 Q1316.5,415.5 1326,415.5 Q1335.5,415.5 1335.5,418.5 V434 Q1335.5,437.2 1326,437.2 Q1316.5,437.2 1316.5,434 Z" fill="url(#cylg)" stroke="#555" stroke-width="1.1"/>
<path d="M1317,419 Q1326,422.5 1335,419" fill="none" stroke="#fff" stroke-width="1.2"/>
<rect x="1282.5" y="455.5" width="15.5" height="15.5" rx="2" fill="#dedede" stroke="#555" stroke-width="1.1"/>
<path d="M1285.5,463 L1288.5,467.5 L1295,458.5" fill="none" stroke="#111" stroke-width="1.5"/>
<circle cx="1169.4" cy="507.6" r="7.4" fill="#000"/><rect x="1168.2" y="506" width="2.6" height="6" fill="#fff"/><rect x="1168.2" y="502.5" width="2.6" height="2.3" fill="#fff"/><rect x="1166.8" y="511" width="5.3" height="1.4" fill="#fff"/><rect x="1166.8" y="506" width="2" height="1.2" fill="#fff"/>
<rect x="1462.8" y="370" width="1.2" height="114" fill="#5a5a5a"/>
<text x="1416.5" y="218" font-size="11" fill="#7fe07f" text-anchor="middle" opacity="0.85">Y</text>
<text x="1472.5" y="274" font-size="11" fill="#ff8a8a" text-anchor="middle" opacity="0.85">X</text>
<text x="1408.5" y="281" font-size="11" fill="#8080ff" text-anchor="middle" opacity="0.85">Z</text>
<path d="M1464,270 H1467" stroke="#ff7a7a" stroke-width="1.5"/>
<path d="M618,924 V944 M614.5,928 L618,924 L621.5,928" fill="none" stroke="#4a4a4a" stroke-width="1.3"/>
<path d="M625,936 Q628,933 624,931.5 Q618,929.5 611,932 Q607,934 609,937 Q611,939 614,939" fill="none" stroke="#4a4a4a" stroke-width="1.4"/>
<path d="M616,937 L612.5,939.2 L616,941.5 Z" fill="#4a4a4a"/>
<path d="M633.5,932 h6 l-3,4 z" fill="#4a4a4a"/>
<rect x="649" y="930.5" width="19" height="13" rx="1" fill="#f4f4f4" stroke="#4a4a4a" stroke-width="1.4"/>
<rect x="652.5" y="934" width="12" height="5.5" fill="#9aa8b8" stroke="#4a4a4a" stroke-width="0.8"/>
<path d="M650,930 L655,925 L656,928 L668,925.5 V930" fill="none" stroke="#4a4a4a" stroke-width="1.2"/>
<path d="M685,934 L682,930.5 Q681,929 682.5,928.5 Q684,928.5 686,931 V924 Q686,922.5 687.5,922.5 Q689,922.5 689,924 V930 V922 Q689,920.5 690.7,920.5 Q692.3,920.5 692.3,922 V930 V923 Q692.3,921.5 694,921.5 Q695.5,921.5 695.5,923 V930 V925 Q695.5,923.5 697,923.5 Q698.5,923.5 698.5,925 V936 Q698.5,943 691.5,943 Q688,943 685,938 Z" fill="#fafafa" stroke="#4a4a4a" stroke-width="1.2" stroke-linejoin="round"/>
<circle cx="720" cy="933" r="5.5" fill="#dfe8ef" stroke="#4a4a4a" stroke-width="1.6"/>
<path d="M724,937 L729,942" stroke="#4a4a4a" stroke-width="2.8" stroke-linecap="round"/>
<path d="M727,926.5 H733 M730,923.5 V929.5 M727,931 H733" stroke="#4a4a4a" stroke-width="1.1"/>
<circle cx="754" cy="932.5" r="7" fill="#dfe8ef" stroke="#4a4a4a" stroke-width="1.6"/>
<rect x="750.5" y="929" width="7" height="7" fill="#fff" stroke="#4a4a4a" stroke-width="1"/>
<path d="M759,938 L764.5,943.5" stroke="#4a4a4a" stroke-width="2.8" stroke-linecap="round"/>
<path d="M772,932 h6 l-3,4 z" fill="#4a4a4a"/>
<rect x="787.5" y="924.5" width="19" height="15" rx="1.5" fill="#c4cdd8" stroke="#4a4a4a" stroke-width="1.3"/>
<rect x="790" y="927" width="14" height="10" fill="#7f9fd0"/>
<path d="M794,940 V942.5 M800,940 V942.5 M791,943.5 H803" stroke="#4a4a4a" stroke-width="1.2"/>
<path d="M810.5,932 h6 l-3,4 z" fill="#4a4a4a"/>
<rect x="826" y="924" width="20" height="20" fill="#7e7e7e" stroke="#555" stroke-width="1"/>
<path d="M828.5,924 V944 M831,924 V944 M833.5,924 V944 M836,924 V944 M838.5,924 V944 M841,924 V944 M843.5,924 V944 M826,926.5 H846 M826,929 H846 M826,931.5 H846 M826,934 H846 M826,936.5 H846 M826,939 H846 M826,941.5 H846" stroke="#d4d4d4" stroke-width="0.7"/>
<path d="M849,932 h6 l-3,4 z" fill="#4a4a4a"/>
<rect x="864.5" y="924.5" width="19" height="19" rx="1.5" fill="#7b98cc" stroke="#4a66a0" stroke-width="1.1"/>
<rect x="866.5" y="926.5" width="6.5" height="6.5" fill="#b6c8e8"/><rect x="875" y="926.5" width="6.5" height="6.5" fill="#b6c8e8"/><rect x="866.5" y="935" width="6.5" height="6.5" fill="#b6c8e8"/><rect x="875" y="935" width="6.5" height="6.5" fill="#b6c8e8"/>
<path d="M888,932 h6 l-3,4 z" fill="#4a4a4a"/>
<rect x="15" y="979" width="2.2" height="18" fill="#4a4a4a"/><path d="M30,979 V997 L18,988 Z" fill="#4a4a4a"/>
<path d="M57,980 V996 L45.5,988 Z" fill="#4a4a4a"/><rect x="59" y="984" width="2.2" height="8" fill="#4a4a4a"/>
<path d="M77,978 V997 L92,987.5 Z" fill="#4a4a4a"/>
<rect x="107" y="984" width="2.2" height="8" fill="#4a4a4a"/><path d="M111,980 V996 L123.5,988 Z" fill="#4a4a4a"/>
<path d="M140,979 V997 L152,988 Z" fill="#4a4a4a"/><rect x="152.5" y="979" width="2.2" height="18" fill="#4a4a4a"/>
<rect x="181" y="967" width="55" height="7" fill="#d9dc55"/>
<path d="M231,969 H246 V974 L242,975 L240,978 H238.5 L236,975 L231,974 Z" fill="#5a5a5a"/>
<rect x="238" y="975" width="2.4" height="34" fill="#5a5a5a"/>
<path d="M185,1007 H235" stroke="#c8c8c8" stroke-width="2"/><path d="M195,1001 V1007 M223,1001 V1007" stroke="#c8c8c8" stroke-width="2"/>
<path d="M184.5,996 V982 Q184.5,978 188,977.5 L191,977 V996 Z" fill="#e8e8e8" stroke="#555" stroke-width="0.9"/>
<path d="M191,981 L196,977.5 V993 L191,997 Z" fill="#4cb85a"/>
<path d="M197,981 L204,977 V992.5 L197,996.5 Z" fill="#d8905a"/>
<rect x="215" y="978" width="16" height="15" fill="none" stroke="#555" stroke-width="0.9" stroke-dasharray="2.2 1.3"/>
<rect x="213.8" y="976.8" width="2.4" height="2.4" fill="#1a8fe8"/><rect x="229.8" y="976.8" width="2.4" height="2.4" fill="#1a8fe8"/><rect x="213.8" y="991.8" width="2.4" height="2.4" fill="#1a8fe8"/>
<path d="M225,995 L232,988" stroke="#f4b030" stroke-width="3"/><path d="M231,987 L233.5,984.5" stroke="#e03030" stroke-width="3"/>
<path d="M1483.33,986.24 L1483.50,988.00 L1480.97,989.29 L1480.60,990.53 L1481.98,993.00 L1480.86,994.36 L1478.17,993.49 L1477.03,994.10 L1476.26,996.83 L1474.50,997.00 L1473.21,994.47 L1471.97,994.10 L1469.50,995.48 L1468.14,994.36 L1469.01,991.67 L1468.40,990.53 L1465.67,989.76 L1465.50,988.00 L1468.03,986.71 L1468.40,985.47 L1467.02,983.00 L1468.14,981.64 L1470.83,982.51 L1471.97,981.90 L1472.74,979.17 L1474.50,979.00 L1475.79,981.53 L1477.03,981.90 L1479.50,980.52 L1480.86,981.64 L1479.99,984.33 L1480.60,985.47 Z" fill="#8e8e8e"/><circle cx="1474.5" cy="988" r="3" fill="#f1f1f1"/></svg></body></html>
